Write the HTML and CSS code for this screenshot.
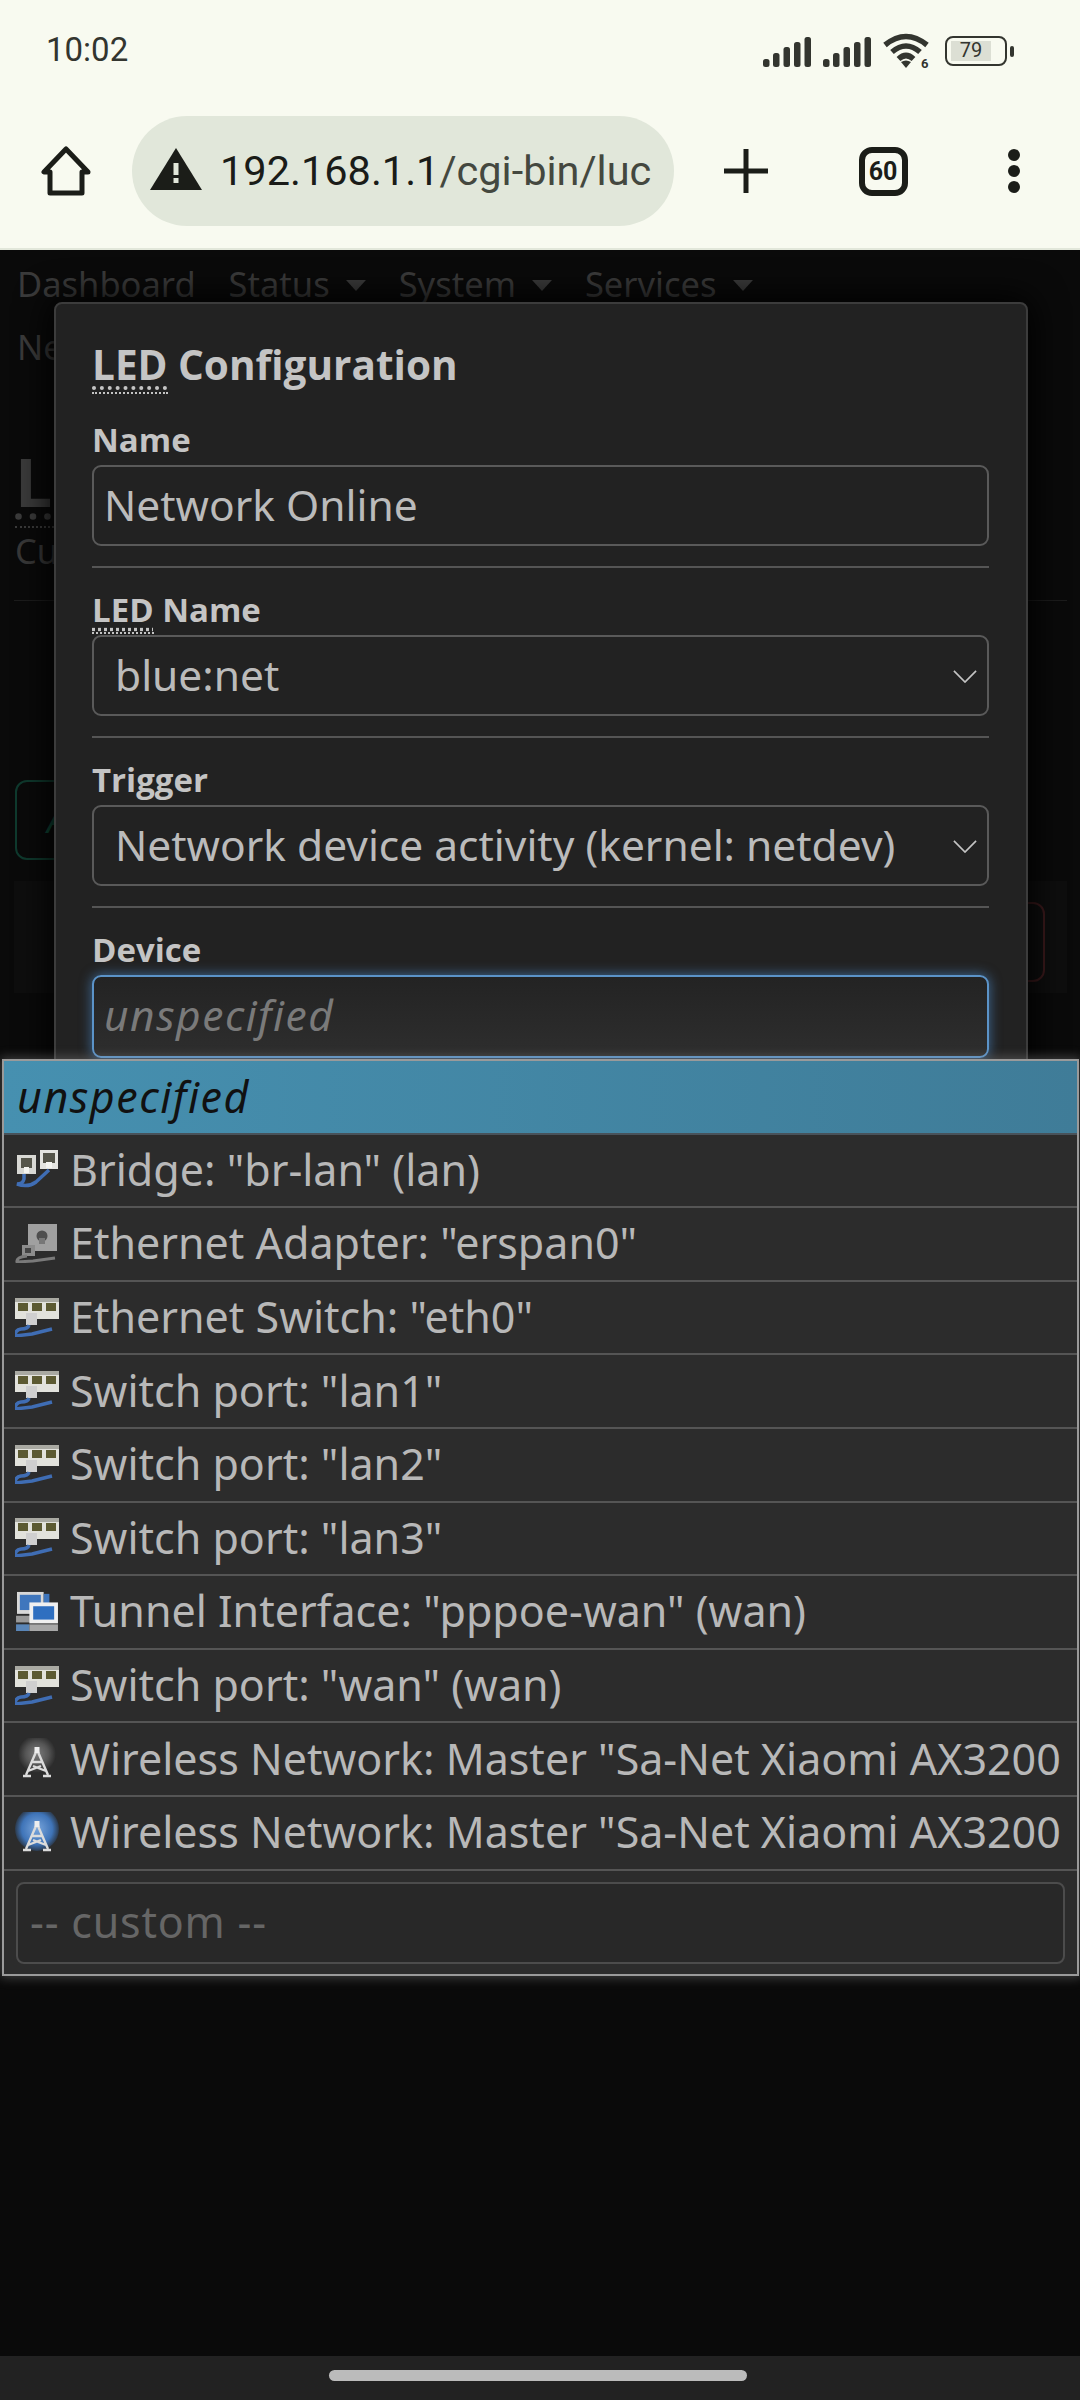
FILE: index.html
```html
<!DOCTYPE html>
<html lang="en">
<head>
<meta charset="utf-8">
<title>LED Configuration</title>
<link rel="stylesheet" href="styles.css">
</head>
<body>
<svg class="sprite" width="0" height="0" aria-hidden="true">
  <defs>
    <radialGradient id="glowGrey"><stop offset="0" stop-color="#7c7c7c"/><stop offset=".6" stop-color="#555"/><stop offset="1" stop-color="#2c2c2c"/></radialGradient>
    <radialGradient id="glowBlue"><stop offset="0" stop-color="#7aa6dc"/><stop offset=".7" stop-color="#3f74b8"/><stop offset="1" stop-color="#2c3a4c"/></radialGradient>
    <symbol id="i-bridge" viewBox="0 0 44 40">
      <rect x="2" y="6" width="19" height="19" fill="#d8d8d4"/><rect x="6" y="9" width="11" height="10" fill="#55554a"/><rect x="9" y="18" width="5" height="6" fill="#f4f4f0"/>
      <rect x="25" y="1" width="18" height="19" fill="#e4e4e0"/><rect x="28" y="4" width="12" height="10" fill="#55554a"/><rect x="31" y="13" width="6" height="6" fill="#f4f4f0"/>
      <path d="M9 25v5q-1 5-7 5 11 4 19-2l13-12" fill="none" stroke="#3f6db4" stroke-width="3.5"/>
    </symbol>
    <symbol id="i-eth" viewBox="0 0 44 40">
      <rect x="13" y="1" width="29" height="27" fill="#a0a0a0"/><circle cx="27" cy="13" r="5.5" fill="#4e4e4e"/><rect x="24" y="15" width="6" height="6" fill="#777"/>
      <rect x="7" y="22" width="13" height="11" fill="#8c8c8c"/><rect x="10" y="25" width="6" height="5" fill="#444"/>
      <path d="M12 33q-11 1-10 6l16-1 22-3" fill="none" stroke="#7a7a7a" stroke-width="3"/>
    </symbol>
    <symbol id="i-switch" viewBox="0 0 44 40">
      <rect y="1" width="44" height="21" fill="#e2e2dc"/><rect y="1" width="44" height="4" fill="#a9a9a2"/>
      <rect x="3" y="6" width="10" height="8" fill="#5c5a32"/><rect x="17" y="6" width="10" height="8" fill="#5c5a32"/><rect x="31" y="6" width="10" height="8" fill="#5c5a32"/>
      <rect x="11" y="16" width="11" height="12" fill="#cfcfcf"/>
      <path d="M14 28q-1 4-8 4-6 1-6 7l17-2 20-5" fill="none" stroke="#3f6db4" stroke-width="3.5"/>
    </symbol>
    <symbol id="i-tunnel" viewBox="0 0 44 42">
      <rect x="1" y="1" width="28" height="23" fill="#d8d8d8"/><rect x="4" y="4" width="22" height="16" fill="#3f76bd"/><rect x="29" y="3" width="6" height="10" fill="#3f76bd"/>
      <rect y="26" width="16" height="7" fill="#999"/><rect y="35" width="14" height="7" fill="#5a86b8"/>
      <rect x="14" y="12" width="30" height="22" fill="#f0f0f0"/><rect x="18" y="16" width="22" height="14" fill="#2f6fc0"/>
      <rect x="14" y="35" width="30" height="7" fill="#a8a8a8"/>
    </symbol>
    <g id="mast" fill="none" stroke="#dcdcdc" stroke-width="2.4">
      <path d="M21 14 11 37M23 14l10 23M17 24h10M13 33l13-5M31 33l-13-5"/><rect x="19.5" y="9" width="5" height="6" fill="#eee" stroke="none"/>
      <path d="M8 38h8M28 38h8"/>
    </g>
    <symbol id="i-wifi-grey" viewBox="0 0 44 40"><circle cx="22" cy="16" r="19" fill="url(#glowGrey)"/><use href="#mast"/></symbol>
    <symbol id="i-wifi-blue" viewBox="0 0 44 40"><circle cx="22" cy="17" r="22" fill="url(#glowBlue)"/><use href="#mast"/></symbol>
    <symbol id="i-signal" viewBox="0 0 48 30">
      <rect x="0" y="22" width="6.5" height="8" rx="2.5"/><rect x="10" y="16" width="6.5" height="14" rx="2.5"/><rect x="20.500" y="10" width="6.5" height="20" rx="2.5"/><rect x="31" y="5" width="6.5" height="25" rx="2.5"/><rect x="41.500" y="0" width="6.5" height="30" rx="2.5"/>
    </symbol>
  </defs>
</svg>

<header class="chrome">
  <div class="status">
    <span class="time">10:02</span>
    <div class="status-icons">
      <svg class="signal" viewBox="0 0 48 30"><use href="#i-signal"/></svg>
      <svg class="signal" viewBox="0 0 48 30"><use href="#i-signal"/></svg>
      <svg class="wifi" viewBox="0 0 48 34">
        <path d="M2 10Q23-7 44 10M9 17Q23 5 37 17M15.500 24Q23 17 30.500 24" fill="none" stroke="#33352f" stroke-width="5.500"/>
        <path d="M23 33l-5-6q5-3 10 0z" fill="#33352f"/>
        <text x="38" y="33" class="wifi-six">6</text>
      </svg>
      <div class="battery"><div class="battery-body"><span class="battery-level">79</span></div><span class="battery-nub"></span></div>
    </div>
  </div>
  <div class="toolbar">
    <div class="tool tool-home">
      <svg class="ic50" viewBox="0 0 50 50"><path d="M25 3 3 26h6v21h32V26h6z" fill="none" stroke="#1b1d18" stroke-width="5" stroke-linejoin="round"/></svg>
    </div>
    <div class="pill">
      <svg class="warn" viewBox="0 0 52 42"><path d="M26 0 52 42H0z" fill="#1b1d18"/><rect x="23.500" y="15" width="5" height="12" fill="#e1e7da"/><rect x="23.500" y="30" width="5" height="5" fill="#e1e7da"/></svg>
      <span class="url"><span class="url-host">192.168.1.1</span>/cgi-bin/luc</span>
    </div>
    <div class="tool tool-plus">
      <svg class="ic44" viewBox="0 0 44 44"><path d="M22 0v44M0 22h44" stroke="#1b1d18" stroke-width="5" stroke-linecap="round"/></svg>
    </div>
    <div class="tool tool-tabs"><span class="tabs">60</span></div>
    <div class="tool tool-menu">
      <svg class="kebab" viewBox="0 0 14 44"><circle cx="7" cy="6" r="6" fill="#1b1d18"/><circle cx="7" cy="22" r="6" fill="#1b1d18"/><circle cx="7" cy="38" r="6" fill="#1b1d18"/></svg>
    </div>
  </div>
</header>

<main class="page">
  <nav class="nav">
    <span class="nav-item">Dashboard</span>
    <span class="nav-item caret">Status</span>
    <span class="nav-item caret">System</span>
    <span class="nav-item caret">Services</span>
    <span class="nav-item caret">Network</span>
  </nav>
  <h2 class="page-title"><abbr class="abbr">LED</abbr> Configuration</h2>
  <p class="page-desc">Customizes the behaviour of the device LEDs</p>
  <hr class="page-rule">
  <div class="page-add"><span class="btn-add">Add LED action</span></div>
  <div class="page-row"><span class="btn-del">Delete</span></div>
</main>

<section class="modal">
  <h4 class="modal-title"><abbr class="abbr">LED</abbr> Configuration</h4>
  <div class="field">
    <label class="field-label">Name</label>
    <div class="input">Network Online</div>
  </div>
  <div class="field">
    <label class="field-label"><abbr class="abbr">LED</abbr> Name</label>
    <div class="input select">blue:net
      <svg class="chevron" viewBox="0 0 26 14"><path d="M1 1l12 12L25 1" fill="none" stroke="#c4c4c4" stroke-width="1.800"/></svg>
    </div>
  </div>
  <div class="field">
    <label class="field-label">Trigger</label>
    <div class="input select">Network device activity (kernel: netdev)
      <svg class="chevron" viewBox="0 0 26 14"><path d="M1 1l12 12L25 1" fill="none" stroke="#c4c4c4" stroke-width="1.800"/></svg>
    </div>
  </div>
  <div class="field field-last">
    <label class="field-label">Device</label>
    <div class="input input-focus">unspecified</div>
  </div>
</section>

<ul class="dropdown">
  <li class="opt opt-active">unspecified</li>
  <li class="opt"><svg class="opt-ic"><use href="#i-bridge"/></svg>Bridge: "br-lan" (lan)</li>
  <li class="opt"><svg class="opt-ic"><use href="#i-eth"/></svg>Ethernet Adapter: "erspan0"</li>
  <li class="opt"><svg class="opt-ic"><use href="#i-switch"/></svg>Ethernet Switch: "eth0"</li>
  <li class="opt"><svg class="opt-ic"><use href="#i-switch"/></svg>Switch port: "lan1"</li>
  <li class="opt"><svg class="opt-ic"><use href="#i-switch"/></svg>Switch port: "lan2"</li>
  <li class="opt"><svg class="opt-ic"><use href="#i-switch"/></svg>Switch port: "lan3"</li>
  <li class="opt"><svg class="opt-ic"><use href="#i-tunnel"/></svg>Tunnel Interface: "pppoe-wan" (wan)</li>
  <li class="opt"><svg class="opt-ic"><use href="#i-switch"/></svg>Switch port: "wan" (wan)</li>
  <li class="opt"><svg class="opt-ic"><use href="#i-wifi-grey"/></svg>Wireless Network: Master "Sa-Net Xiaomi AX3200</li>
  <li class="opt"><svg class="opt-ic"><use href="#i-wifi-blue"/></svg>Wireless Network: Master "Sa-Net Xiaomi AX3200</li>
  <li class="opt-custom"><div class="custom-input">-- custom --</div></li>
</ul>

<footer class="navbar"><span class="handle"></span></footer>
</body>
</html>
```
FILE: styles.css
```css
* { box-sizing: border-box; }
html, body { margin: 0; padding: 0; }
body {
  position: relative;
  width: 1080px;
  height: 2400px;
  overflow: hidden;
  display: flex;
  flex-direction: column;
  background: #0a0a0a;
  font-family: "Noto Sans", "Open Sans", sans-serif;
}
.sprite { position: absolute; }

/* browser chrome */
.chrome { background: #f8faf0; border-bottom: 2px solid #e2e7da; height: 250px; flex: none; }
.status { height: 116px; display: flex; align-items: flex-start; justify-content: space-between; padding: 30px 66px 0 46px; }
.time { font: 400 33px/40px Roboto, sans-serif; color: #33352f; }
.status-icons { display: flex; align-items: flex-start; padding-top: 5px; }
.signal { width: 48px; height: 30px; fill: #33352f; margin-right: 12px; margin-top: 2px; }
.wifi { width: 48px; height: 34px; margin-right: 14px; overflow: visible; }
.wifi-six { font: 700 13px Roboto, sans-serif; fill: #33352f; }
.battery { display: flex; align-items: center; height: 30px; margin-top: 1px; }
.battery-body { width: 62px; height: 30px; border: 2.5px solid #33352f; border-radius: 8px; padding: 3px 14px 3px 4px; }
.battery-level { display: block; height: 100%; background: #dcdfd4; font: 400 20px/19px Roboto, sans-serif; color: #33352f; text-align: center; }
.battery-nub { width: 4px; height: 11px; margin-left: 3px; background: #33352f; border-radius: 2px; }

.toolbar { height: 132px; display: flex; align-items: flex-start; }
.tool { height: 110px; display: flex; align-items: center; justify-content: center; }
.tool-home { width: 132px; }
.tool-plus { width: 143px; }
.tool-tabs { width: 132px; }
.tool-menu { width: 131px; padding-right: 2px; }
.ic50 { width: 50px; height: 50px; }
.ic44 { width: 44px; height: 44px; }
.kebab { width: 14px; height: 44px; }
.pill { width: 542px; height: 110px; border-radius: 55px; background: #e1e7da; display: flex; align-items: center; padding-left: 18px; }
.warn { width: 52px; height: 42px; margin-right: 18px; flex: none; margin-top: -4px; }
.url { font: 400 41.500px/50px Roboto, sans-serif; color: #44483f; white-space: nowrap; }
.url-host { color: #1a1c18; }
.tabs { width: 49px; height: 49px; border: 6px solid #1b1d18; border-radius: 13px; display: flex; align-items: center; justify-content: center; font: 700 25px/1 Roboto, sans-serif; color: #1b1d18; }

/* dimmed page behind the modal */
.page { flex: 1; padding: 10px 14px 0; color: #3b3b3b; font-size: 34.500px; }
.nav { display: flex; flex-wrap: wrap; column-gap: 33px; row-gap: 15px; padding-left: 3px; }
.nav-item { line-height: 48px; display: flex; align-items: center; }
.caret::after { content: ""; margin-left: 16px; margin-top: 2px; border: 10px solid transparent; border-top: 11px solid #3b3b3b; border-bottom: 0; }
.nav-item:last-child { width: 300px; }
.page-title { margin: 72px 0 0 1px; font-family: "Open Sans", sans-serif; font-size: 66px; line-height: 76px; font-weight: 700; color: #3b3b3b; }
.page-desc { margin: 8px 0 0 1px; line-height: 48px; color: #383838; }
.page-rule { margin: 25px 0 0; height: 1px; border: 0; background: #1c1c1c; width: 1053px; }
.page-add { padding: 179px 0 0 1px; }
.btn-add { display: inline-block; height: 80px; width: 300px; padding: 0 30px; border: 2px solid #0f3a2e; border-radius: 12px; color: #0f4a38; line-height: 76px; font-style: italic; }
.page-row { margin-top: 21px; height: 112px; background: #0e0e0e; width: 1053px; padding: 21px 22px 0 0; display: flex; justify-content: flex-end; }
.btn-del { width: 150px; height: 80px; border: 2px solid #3c1a1c; border-radius: 12px; }

/* modal */
.modal {
  position: absolute;
  left: 54px;
  top: 302px;
  width: 974px;
  height: 900px;
  padding: 35px 37px 0 36px;
  background: #222;
  border: 2px solid #3c3c3c;
  border-radius: 8px;
  box-shadow: 0 0 34px 4px #000;
}
.modal-title { margin: 0 0 31px; font-family: "Open Sans", sans-serif; font-size: 40.500px; line-height: 52px; font-weight: 700; color: #c4c4c4; }
.abbr { text-decoration: underline dotted; text-underline-offset: 6px; border-bottom: 2px dotted #c4c4c4; }
.page-title .abbr { border-bottom-color: #3b3b3b; }
.field { padding-bottom: 20px; margin-bottom: 24px; border-bottom: 2px solid #555; }
.field-last { border-bottom: 0; }
.field-label { display: block; height: 43px; font-family: "Open Sans", sans-serif; font-size: 33px; line-height: 36px; font-weight: 700; color: #c4c4c4; }
.input { position: relative; height: 81px; padding: 0 10px; border: 2px solid #5a5a5a; border-radius: 9px; font-size: 42.500px; line-height: 76px; color: #bbb; white-space: nowrap; }
.select { padding-left: 21px; }
.chevron { position: absolute; right: 10px; top: 33px; width: 24px; height: 13px; }
.input-focus { height: 83px; border-color: #5b93c8; background: linear-gradient(#232323, #2e2e2e); box-shadow: 0 0 12px 1px rgba(80, 150, 220, .55); color: #7a7a7a; font-style: italic; letter-spacing: 1.500px; }

/* dropdown */
.dropdown {
  position: absolute;
  left: 2px;
  top: 1059px;
  width: 1077px;
  margin: 0;
  padding: 0;
  list-style: none;
  background: #2c2c2c;
  border: 2px solid #9a9a9a;
  box-shadow: 0 0 10px 2px rgba(160, 160, 160, .35);
}
.opt { height: 73.600px; display: flex; align-items: center; padding: 0 0 2px 11px; border-bottom: 2px solid #555; font-size: 43px; color: #b8b8b8; white-space: nowrap; overflow: hidden; }
.opt-active { background: linear-gradient(90deg, #4690b0, #3f7c98); color: #111; font-style: italic; letter-spacing: 1.500px; padding: 0 0 0 13px; border-bottom-color: #48525a; }
.opt-ic { width: 44px; height: 40px; margin-right: 11px; flex: none; filter: blur(.5px); }
.opt-custom { padding: 11px 12px 10px; }
.custom-input { height: 82px; padding: 0 12px; border: 2px solid #4c4c4c; border-radius: 8px; background: #282828; font-size: 43px; line-height: 76px; color: #666; letter-spacing: .8px; }

/* gesture bar */
.navbar { flex: none; height: 44px; background: #222; display: flex; justify-content: center; padding-top: 14px; }
.handle { width: 418px; height: 11px; margin-right: 5px; border-radius: 6px; background: #bbb; }
```
